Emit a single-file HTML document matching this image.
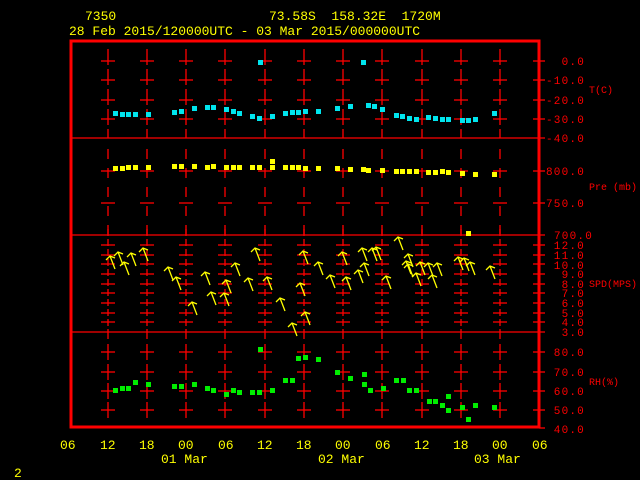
<!DOCTYPE html>
<html><head><meta charset="utf-8"><style>
html,body{margin:0;padding:0;background:#000;width:640px;height:480px;overflow:hidden}
svg{display:block}
text{font-family:"Liberation Mono",monospace}
.y{fill:#ffff00;font-size:13px}
.r{fill:#ff0000;font-size:11px;letter-spacing:1.2px}
.s{fill:#ff0000;font-size:10px}
</style></head><body>
<svg id="s" width="640" height="480" xmlns="http://www.w3.org/2000/svg">
<rect width="640" height="480" fill="#000"/>
<text class="y" x="85" y="20">7350</text>
<text class="y" x="269" y="20" xml:space="preserve">73.58S  158.32E  1720M</text>
<text class="y" x="69" y="35">28 Feb 2015/120000UTC - 03 Mar 2015/000000UTC</text>
<g id="grid" stroke="#ff0000" stroke-width="1.3" fill="none"></g>
<rect x="71" y="41" width="468" height="386" fill="none" stroke="#ff0000" stroke-width="3"/>
<g text-anchor="end">
<text class="r" x="585" y="65">0.0</text>
<text class="r" x="585" y="84">-10.0</text>
<text class="r" x="585" y="104">-20.0</text>
<text class="r" x="585" y="123">-30.0</text>
<text class="r" x="585" y="142">-40.0</text>
<text class="r" x="585" y="175">800.0</text>
<text class="r" x="585" y="207">750.0</text>
<text class="r" x="593" y="239">700.0</text>
<text class="r" x="585" y="249">12.0</text>
<text class="r" x="585" y="259">11.0</text>
<text class="r" x="585" y="269">10.0</text>
<text class="r" x="585" y="278">9.0</text>
<text class="r" x="585" y="288">8.0</text>
<text class="r" x="585" y="297">7.0</text>
<text class="r" x="585" y="307">6.0</text>
<text class="r" x="585" y="317">5.0</text>
<text class="r" x="585" y="326">4.0</text>
<text class="r" x="585" y="336">3.0</text>
<text class="r" x="585" y="356">80.0</text>
<text class="r" x="585" y="376">70.0</text>
<text class="r" x="585" y="395">60.0</text>
<text class="r" x="585" y="414">50.0</text>
<text class="r" x="585" y="433">40.0</text>
</g>
<text class="s" x="589" y="93">T(C)</text>
<text class="s" x="589" y="190">Pre (mb)</text>
<text class="s" x="589" y="287">SPD(MPS)</text>
<text class="s" x="589" y="385">RH(%)</text>
<g class="y">
<text class="y" x="60" y="449">06</text><text class="y" x="100" y="449">12</text><text class="y" x="139" y="449">18</text>
<text class="y" x="178" y="449">00</text><text class="y" x="218" y="449">06</text><text class="y" x="257" y="449">12</text>
<text class="y" x="296" y="449">18</text><text class="y" x="335" y="449">00</text><text class="y" x="375" y="449">06</text>
<text class="y" x="414" y="449">12</text><text class="y" x="453" y="449">18</text><text class="y" x="492" y="449">00</text>
<text class="y" x="532" y="449">06</text>
<text class="y" x="161" y="463">01 Mar</text><text class="y" x="318" y="463">02 Mar</text><text class="y" x="474" y="463">03 Mar</text>
<text class="y" x="14" y="477">2</text>
</g>
<g id="pts"></g>
<g id="arr" stroke="#ffff00" stroke-width="1.3" fill="none"></g>
</svg>
<script>
var NS="http://www.w3.org/2000/svg";
function el(p,t,a){var e=document.createElementNS(NS,t);for(var k in a)e.setAttribute(k,a[k]);p.appendChild(e);return e;}
var g=document.getElementById('grid');
var xs=[108,147,186,225,265,304,343,382,422,461,500];
var T=[61,80,100,119],P=[171,203],S=[245,255,264,274,284,293,303,313,322],R=[352,372,391,410];
[138,235,332].forEach(function(y){el(g,'line',{x1:71,x2:545,y1:y,y2:y});});
[61,80,100,119,171,203,245,255,264,274,284,293,303,313,322,352,372,391,410].forEach(function(y){el(g,'line',{x1:533,x2:545,y1:y,y2:y});});
el(g,'line',{x1:539,x2:545,y1:428,y2:428});
xs.forEach(function(x){
 el(g,'line',{x1:x,x2:x,y1:49,y2:138,'stroke-dasharray':'16 4'});
 el(g,'line',{x1:x,x2:x,y1:149,y2:235,'stroke-dasharray':'10 9'});
 el(g,'line',{x1:x,x2:x,y1:229,y2:332,'stroke-dasharray':'7 3'});
 el(g,'line',{x1:x,x2:x,y1:332,y2:339});
 R.forEach(function(y){el(g,'line',{x1:x,x2:x,y1:y-8,y2:y+8});});
 T.concat(P,S,R).forEach(function(y){el(g,'line',{x1:x-7,x2:x+7,y1:y,y2:y});});
});
var pts=document.getElementById('pts');
function sq(c,arr){for(var i=0;i<arr.length;i+=2)el(pts,'rect',{x:arr[i]-2,y:arr[i+1]-2,width:5,height:5,fill:c});}
sq('#00e5ee',[115,113,122,114,128,114,135,114,148,114,174,112,181,111,194,108,207,107,213,107,226,109,233,111,239,113,252,116,259,118,260,62,272,116,285,113,292,112,298,112,305,111,318,111,337,108,350,106,363,62,368,105,374,106,382,109,396,115,402,116,409,118,416,119,428,117,435,118,442,119,448,119,462,120,468,120,475,119,494,113]);
sq('#ffff00',[115,168,122,168,128,167,135,167,148,167,174,166,181,166,194,166,207,167,213,166,226,167,233,167,239,167,252,167,259,167,272,167,272,161,285,167,292,167,298,167,305,168,318,168,337,168,350,169,363,169,368,170,382,170,396,171,402,171,409,171,416,171,428,172,435,172,442,171,448,172,462,173,475,174,494,174,468,233]);
sq('#00ee00',[115,390,122,388,128,388,135,382,148,384,174,386,181,386,194,384,207,388,213,390,226,394,233,390,239,392,252,392,259,392,260,349,272,390,285,380,292,380,298,358,305,357,318,359,337,372,350,378,364,374,364,384,370,390,383,388,396,380,403,380,409,390,416,390,429,401,435,401,442,405,448,410,448,396,462,407,468,419,475,405,494,407]);
var a=document.getElementById('arr');
var tips=[[110,256],[118,252],[131,253],[124,262],[143,248],[168,267],[176,277],[205,272],[211,292],[226,280],[224,293],[235,263],[192,302],[255,248],[267,277],[248,278],[280,298],[292,323],[305,312],[300,283],[318,262],[330,275],[346,277],[342,252],[362,248],[372,248],[376,247],[364,263],[358,270],[386,276],[398,237],[408,254],[406,261],[420,262],[428,263],[437,263],[432,275],[458,257],[464,258],[470,262],[490,266],[416,273],[303,251],[408,264]];
tips.forEach(function(t){var x=t[0],y=t[1];
 el(a,'path',{d:'M'+x+' '+y+'L'+(x+5)+' '+(y+13)+'M'+(x-4)+' '+(y+4)+'L'+x+' '+y+'L'+(x+5)+' '+(y+2)});});
</script>
</body></html>
